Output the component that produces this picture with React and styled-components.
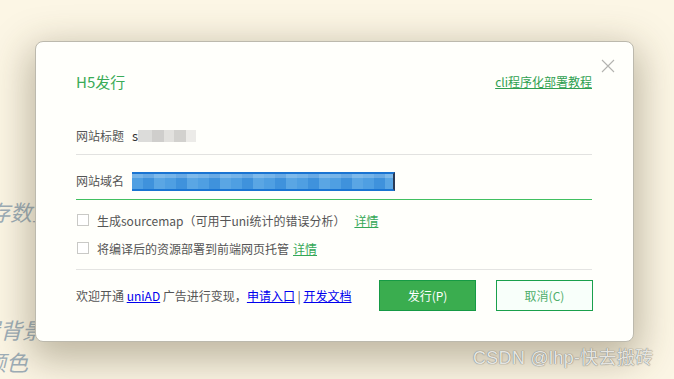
import React from "react";
import styled, { createGlobalStyle } from "styled-components";

const Global = createGlobalStyle`
  html, body { margin: 0; padding: 0; }
  body {
    background: #fcf6e5;
    font-family: "Noto Sans CJK SC", "Noto Sans", sans-serif;
  }
  #root { height: 379px; overflow: hidden; position: relative; }
`;

const Page = styled.div`
  position: relative;
  width: 674px;
  height: 379px;
  overflow: hidden;
  background: #fcf6e5;
`;

const BgText = styled.div`
  padding-top: 195px;
  display: flex;
  flex-direction: column;
`;

const BgLine = styled.p`
  margin: ${(p) => p.$top || 0}px 0 0 ${(p) => p.$indent || 0}px;
  font-size: 22px;
  line-height: 32px;
  font-style: italic;
  color: #9eaeb8;
  white-space: nowrap;
  font-family: "Noto Sans CJK SC", sans-serif;
`;

const Dialog = styled.div`
  position: absolute;
  left: 35px;
  top: 41px;
  width: 599px;
  height: 301px;
  box-sizing: border-box;
  border: 1px solid #bcb9ad;
  border-radius: 8px;
  background: #fffffb;
  box-shadow: 0 12px 38px 6px rgba(70, 60, 30, 0.34);
  padding: 30px 41px 30px 40px;
  display: flex;
  flex-direction: column;
`;

const Header = styled.div`
  height: 20px;
  display: flex;
  align-items: center;
  justify-content: space-between;
`;

const Title = styled.div`
  font-size: 15px;
  color: #3aab57;
  line-height: 20px;
`;

const HelpLink = styled.a`
  font-size: 12px;
  color: #2f9f51;
  text-decoration: underline;
  line-height: 16px;
  cursor: pointer;
`;

const Close = styled.button`
  position: absolute;
  left: 564px;
  top: 16px;
  width: 15px;
  height: 15px;
  padding: 0;
  border: none;
  background: transparent;
  display: flex;
  align-items: center;
  justify-content: center;
`;

const Field = styled.div`
  height: 46px;
  box-sizing: border-box;
  margin-top: ${(p) => p.$top || 0}px;
  display: flex;
  align-items: flex-end;
  padding-bottom: 10px;
  border-bottom: 1px solid ${(p) => (p.$active ? "#41c060" : "#e2e2e0")};
`;

const Label = styled.span`
  width: 56px;
  flex: none;
  font-size: 12px;
  line-height: 16px;
  color: #555;
`;

const Value = styled.span`
  display: flex;
  align-items: center;
  font-size: 13px;
  line-height: 16px;
  color: #333;
`;

const Blur = styled.span`
  display: inline-block;
  width: ${(p) => p.$w}px;
  height: 12px;
  background: ${(p) => p.$c};
`;

const Selection = styled.span`
  display: block;
  width: 263px;
  height: 19px;
  margin-bottom: -2px;
  box-sizing: border-box;
  border-right: 2px solid #2a3a55;
  background:
    linear-gradient(180deg, rgba(255,255,255,0.22) 0 30%, rgba(255,255,255,0) 30%),
    repeating-linear-gradient(90deg, #4f9fe2 0 11px, #3f92dc 11px 22px, #5aa6e4 22px 33px),
    #1f7ad6;
  border-top: 2px solid #1a74d2;
  border-bottom: 2px solid #1a74d2;
`;

const Checks = styled.div`
  padding: 6px 0 7px;
  border-bottom: 1px solid #e4e4e2;
  display: flex;
  flex-direction: column;
`;

const CheckRow = styled.label`
  height: 28px;
  display: flex;
  align-items: center;
  font-size: 12px;
  color: #555;
  padding-left: 1px;
`;

const Box = styled.span`
  width: 12px;
  height: 12px;
  box-sizing: border-box;
  border: 1px solid #c9c9c6;
  background: #fff;
  margin-right: 8px;
  flex: none;
`;

const Detail = styled.a`
  color: #35a857;
  text-decoration: underline;
  margin-left: ${(p) => p.$gap}px;
`;

const Footer = styled.div`
  margin-top: 10px;
  height: 31px;
  display: flex;
  align-items: center;
`;

const Promo = styled.div`
  font-size: 12px;
  color: #555;
  white-space: nowrap;
`;

const Blue = styled.a`
  color: #0000ee;
  text-decoration: underline;
`;

const Buttons = styled.div`
  margin-left: auto;
  margin-right: -1px;
  display: flex;
  gap: 20px;
`;

const Btn = styled.button`
  width: 97px;
  height: 31px;
  box-sizing: border-box;
  font-family: "Noto Sans CJK SC", sans-serif;
  font-size: 12px;
  border: 1px solid ${(p) => (p.$primary ? "#169a45" : "#1aa04c")};
  background: ${(p) => (p.$primary ? "#3aad4f" : "#f8fffa")};
  color: ${(p) => (p.$primary ? "#ffffff" : "#4fae6a")};
  padding: 0;
  cursor: pointer;
`;

const Watermark = styled.div`
  position: absolute;
  left: 473px;
  top: 345px;
  font-family: "Liberation Sans", "Noto Sans CJK SC", sans-serif;
  font-size: 18px;
  line-height: 26px;
  letter-spacing: 0.3px;
  color: rgba(244, 244, 240, 0.9);
  text-shadow: 0 0 1px #7d7d78, 0 0 1px #7d7d78;
  white-space: nowrap;
`;

export default function App() {
  return (
    <Page>
      <Global />
      <BgText>
        <BgLine $indent={-12}>存数量</BgLine>
        <BgLine $top={86} $indent={-22}>置背景</BgLine>
        <BgLine $indent={-16}>颜色</BgLine>
      </BgText>

      <Dialog>
        <Close aria-label="close">
          <svg width="14" height="14" viewBox="0 0 14 14">
            <path d="M1 1 L13 13 M13 1 L1 13" stroke="#b3b3b0" strokeWidth="1.1" fill="none" />
          </svg>
        </Close>
        <Header>
          <Title>H5发行</Title>
          <HelpLink>cli程序化部署教程</HelpLink>
        </Header>

        <Field $top={18}>
          <Label>网站标题</Label>
          <Value>
            s
            <Blur $w={14} $c="#dcdcda" />
            <Blur $w={12} $c="#cfcecc" />
            <Blur $w={10} $c="#e2e1de" />
            <Blur $w={12} $c="#d2d1ce" />
            <Blur $w={10} $c="#ecebe8" />
          </Value>
        </Field>
        <Field $active>
          <Label>网站域名</Label>
          <Selection />
        </Field>

        <Checks>
          <CheckRow>
            <Box />
            生成sourcemap（可用于uni统计的错误分析）
            <Detail $gap={9}>详情</Detail>
          </CheckRow>
          <CheckRow>
            <Box />
            将编译后的资源部署到前端网页托管
            <Detail $gap={4}>详情</Detail>
          </CheckRow>
        </Checks>

        <Footer>
          <Promo>
            欢迎开通 <Blue>uniAD</Blue> 广告进行变现，<Blue>申请入口</Blue> | <Blue>开发文档</Blue>
          </Promo>
          <Buttons>
            <Btn $primary>发行(P)</Btn>
            <Btn>取消(C)</Btn>
          </Buttons>
        </Footer>
      </Dialog>

      <Watermark>CSDN @lhp-快去搬砖</Watermark>
    </Page>
  );
}
